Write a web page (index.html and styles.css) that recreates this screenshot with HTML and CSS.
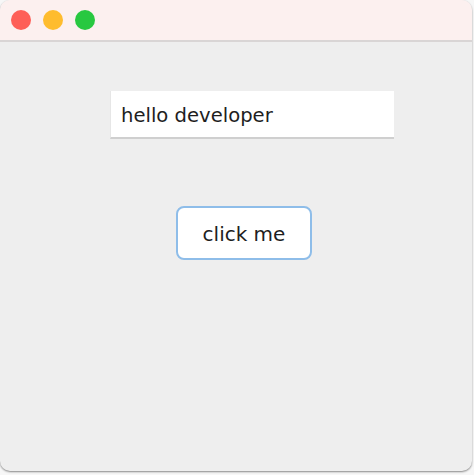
FILE: index.html
```html
<!DOCTYPE html>
<html>
<head>
<meta charset="utf-8">
<link rel="stylesheet" href="styles.css">
</head>
<body>
<div class="window">
  <div class="titlebar">
    <span class="light red"></span>
    <span class="light yellow"></span>
    <span class="light green"></span>
  </div>
  <div class="content">
    <div class="field">hello developer</div>
    <button class="btn">click me</button>
  </div>
</div>
</body>
</html>
```
FILE: styles.css
```css
html, body {
  margin: 0;
  padding: 0;
}
body {
  width: 474px;
  height: 475px;
  background: #f7f7f7;
  font-family: "DejaVu Sans", "Liberation Sans", sans-serif;
  overflow: hidden;
}
.window {
  width: 472px;
  height: 471px;
  border-radius: 10px;
  overflow: hidden;
  background: #eeeeee;
  box-shadow: 0 1px 2px rgba(0, 0, 0, 0.45);
  display: flex;
  flex-direction: column;
}
.titlebar {
  flex: none;
  background: #fcf0ef;
  border-bottom: 2px solid #d9d5d5;
  display: flex;
  align-items: center;
  gap: 12px;
  padding-left: 11px;
  padding-bottom: 1px;
  box-sizing: border-box;
  height: 42px;
}
.light {
  width: 20px;
  height: 20px;
  border-radius: 50%;
  display: block;
}
.red { background: #fe5f57; }
.yellow { background: #febc2e; }
.green { background: #28c840; }
.content {
  flex: 1;
  display: flex;
  flex-direction: column;
  align-items: flex-start;
  padding-top: 49px;
}
.field {
  margin-left: 110px;
  width: 284px;
  height: 48px;
  box-sizing: border-box;
  background: #ffffff;
  border-bottom: 2px solid #cfcfcf;
  border-left: 1px solid #e6e6e6;
  font-size: 19.6px;
  line-height: 43px;
  padding-top: 3px;
  color: #1e1e1e;
  padding-left: 10px;
}
.btn {
  margin-left: 176px;
  margin-top: 67px;
  width: 136px;
  height: 54px;
  background: #ffffff;
  border: 2px solid #8ebde9;
  border-radius: 8px;
  font-family: "DejaVu Sans", "Liberation Sans", sans-serif;
  font-size: 20px;
  color: #1e1e1e;
  padding: 0;
  padding-top: 2px;
}
```
